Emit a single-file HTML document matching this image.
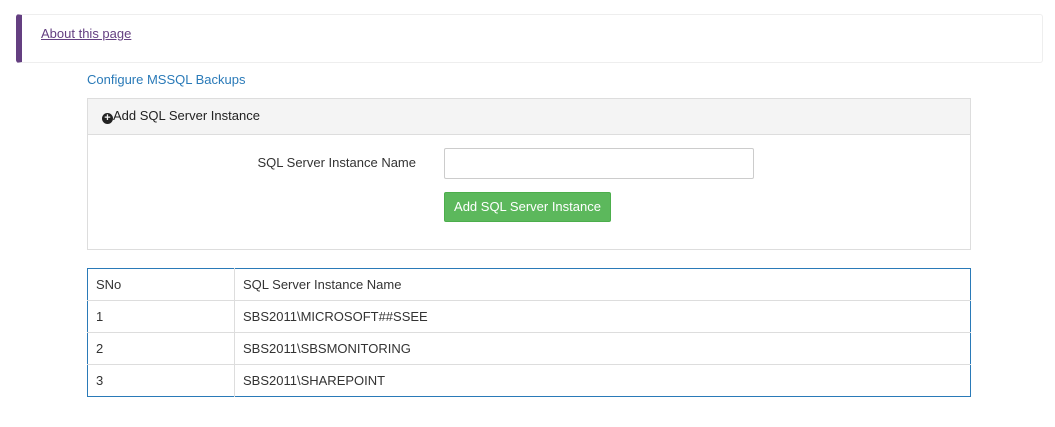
<!DOCTYPE html>
<html><head><style>
*{box-sizing:border-box;margin:0;padding:0}
body{width:1055px;height:427px;background:#fff;font-family:"Liberation Sans",sans-serif;font-size:13px;color:#333;position:relative;overflow:hidden}
.abs{position:absolute}
td{border-top:1px solid #ddd;height:32px;padding:0 8px;vertical-align:middle}
tr:first-child td{border-top:none}
td:first-child{border-right:1px solid #ddd;width:147px}
</style></head><body>
<div class="abs" style="left:16px;top:14px;width:1027px;height:49px;border:1px solid #eee;border-left:6px solid #643f81;border-radius:3px"></div>
<a class="abs" style="left:41px;top:26px;color:#643f81;text-decoration:underline;font-size:13px">About this page</a>
<div class="abs" style="left:87px;top:72px;color:#2a7ab8">Configure MSSQL Backups</div>
<div class="abs" style="left:87px;top:98px;width:884px;height:152px;border:1px solid #ddd">
 <div style="height:36px;background:#f4f4f4;border-bottom:1px solid #ddd;padding:9px 0 0 14px;color:#222"><span style="display:inline-block;width:11px;height:11px;border-radius:50%;background:#222;color:#f4f4f4;font-size:11px;line-height:11px;text-align:center;font-weight:bold;vertical-align:-1px">+</span>Add SQL Server Instance</div>
</div>
<div class="abs" style="left:200px;top:155px;width:216px;text-align:right">SQL Server Instance Name</div>
<div class="abs" style="left:444px;top:148px;width:310px;height:31px;border:1px solid #ccc;border-radius:2px"></div>
<div class="abs" style="left:444px;top:192px;width:167px;height:30px;background:#5cb85c;border:1px solid #4cae4c;border-radius:2px;color:#fff;text-align:center;line-height:28px">Add SQL Server Instance</div>
<table class="abs" style="left:87px;top:268px;width:884px;border:1px solid #2a7ab8;border-collapse:collapse">
<tr><td>SNo</td><td>SQL Server Instance Name</td></tr>
<tr><td>1</td><td>SBS2011\MICROSOFT##SSEE</td></tr>
<tr><td>2</td><td>SBS2011\SBSMONITORING</td></tr>
<tr><td>3</td><td>SBS2011\SHAREPOINT</td></tr>
</table>
</body></html>
